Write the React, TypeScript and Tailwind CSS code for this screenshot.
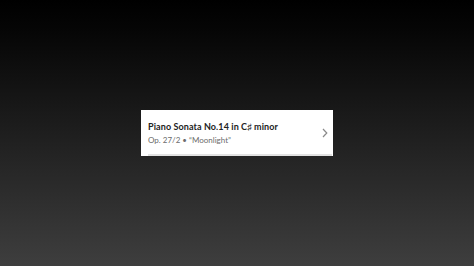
import React from "react";

const App: React.FC = () => {
  return (
    <div className="w-full h-[266px] flex items-center justify-center bg-[linear-gradient(180deg,#000000_0%,#060606_12%,#3e3e3e_100%)]">
      {/* Work card */}
      <div className="w-[192px] h-[46px] bg-white flex flex-col">
        <div className="flex-1 flex items-center pl-[7px] pr-[5px] pt-[2px]">
          <div className="flex-1 flex flex-col gap-[1px] font-['Lato',sans-serif] leading-[12px]">
            <span className="text-[9px] font-bold text-[#222222] tracking-[0.1px]">
              Piano Sonata No.14 in C♯ minor
            </span>
            <span className="text-[8px] text-[#6b6b6b]">
              Op. 27/2 • “Moonlight”
            </span>
          </div>
          <svg width="6" height="10" viewBox="0 0 6 10" className="shrink-0">
            <path d="M1 1 L4.8 5 L1 9" fill="none" stroke="#8a8a8a" strokeWidth="1.2" />
          </svg>
        </div>
        <div className="h-[2px] ml-[7px] mr-[1px] bg-[#e2e2e2]" />
      </div>
    </div>
  );
};

export default App;
